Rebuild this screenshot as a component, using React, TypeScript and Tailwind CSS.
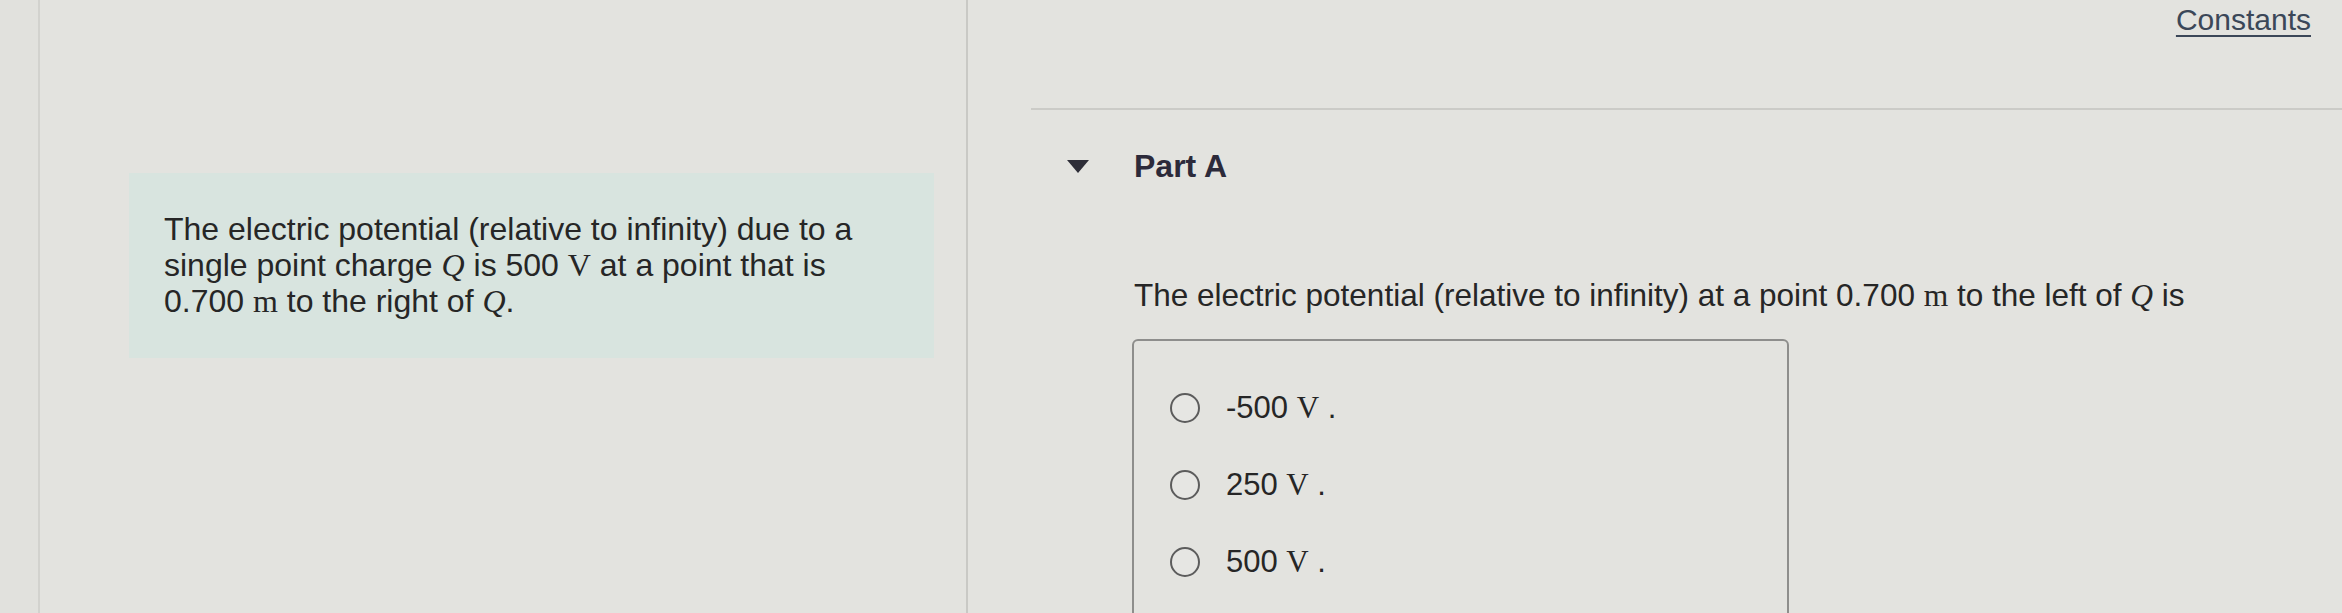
import React from 'react';

const sans = { fontFamily: '"Liberation Sans", Arial, sans-serif' };

const MathI = ({ children }: { children: React.ReactNode }) => (
  <span className="italic" style={{ fontFamily: '"Liberation Serif", "Times New Roman", serif' }}>
    {children}
  </span>
);

const MathR = ({ children }: { children: React.ReactNode }) => (
  <span style={{ fontFamily: '"Liberation Serif", "Times New Roman", serif' }}>{children}</span>
);

const options = ['-500', '250', '500'];

const App = () => {
  return (
    <div className="flex h-[613px] w-[2342px] overflow-hidden bg-[#e3e3df] text-[#262626]" style={sans}>
      {/* left gutter */}
      <div className="w-[40px] shrink-0 border-r-2 border-[#d2d2ce] bg-[#e1e1dd]" />

      {/* intro panel */}
      <div className="w-[928px] shrink-0 border-r-2 border-[#c9c9c5] pl-[89px] pt-[173px]">
        <div className="h-[185px] w-[805px] bg-[#d8e4df] pl-[35px] pt-[38px]">
          <p className="w-[720px] text-[32px] leading-[36px]">
            The electric potential (relative to infinity) due to a single point charge <MathI>Q</MathI> is 500{' '}
            <MathR>V</MathR> at a point that is 0.700 <MathR>m</MathR> to the right of <MathI>Q</MathI>.
          </p>
        </div>
      </div>

      {/* question panel */}
      <div className="flex min-w-0 flex-1 flex-col">
        <div className="flex shrink-0 justify-end pr-[31px] pt-[2px]">
          <a className="text-[30px] leading-[36px] text-[#3b4758] underline underline-offset-[5px] decoration-2">
            Constants
          </a>
        </div>

        <div className="ml-[63px] mt-[70px] h-[2px] shrink-0 bg-[#cbcbc7]" />

        <div className="ml-[99px] mt-[37px] flex shrink-0 items-center">
          <svg width="22" height="13" viewBox="0 0 22 13" className="mr-[45px]">
            <polygon points="0,0 22,0 11,13" fill="#2e2e38" />
          </svg>
          <span className="text-[32px] font-bold leading-[38px] text-[#2c2a3a]">Part A</span>
        </div>

        <p className="ml-[166px] mt-[91px] shrink-0 text-[31.5px] leading-[38px]">
          The electric potential (relative to infinity) at a point 0.700 <MathR>m</MathR> to the left of{' '}
          <MathI>Q</MathI> is
        </p>

        <div className="ml-[164px] mt-[24px] h-[320px] w-[657px] shrink-0 rounded-[6px] border-2 border-[#8e8e8c] pl-[36px] pt-[28px]">
          {options.map((v) => (
            <div key={v} className="flex h-[77px] items-center">
              <span className="h-[30px] w-[30px] rounded-full border-2 border-[#5c5c5c] bg-[#e6e6e3]" />
              <span className="ml-[26px] text-[31px] leading-[38px]">
                {v} <MathR>V</MathR> .
              </span>
            </div>
          ))}
        </div>
      </div>
    </div>
  );
};

export default App;
